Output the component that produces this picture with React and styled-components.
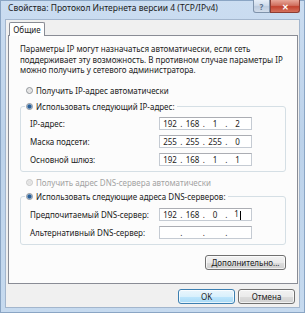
import styled, { createGlobalStyle } from "styled-components";

const Global = createGlobalStyle`
  html, body { margin: 0; padding: 0; background: #ffffff; }
  body { font-family: "Noto Sans", "Liberation Sans", sans-serif; color: #1b1b1b; }
`;

const Window = styled.div`
  width: 305px;
  height: 313px;
  box-sizing: border-box;
  display: flex;
  flex-direction: column;
  border: 1px solid #8aa5c4;
  padding: 0 4px 4px 4px;
  background: linear-gradient(180deg, #cbddf1 0%, #bcd2ea 45%, #c6daef 100%);
`;

const TitleBar = styled.div`
  height: 18px;
  display: flex;
  align-items: flex-start;
`;

const Title = styled.div`
  flex: 1;
  font-size: 8.5px;
  line-height: 13px;
  padding-left: 3px;
  white-space: nowrap;
`;

const CaptionButton = styled.div`
  width: ${(p) => p.$w}px;
  height: 13px;
  margin-top: -1px;
  box-sizing: border-box;
  border: 1px solid ${(p) => (p.$close ? "#8d3d33" : "#7f93ab")};
  border-top: none;
  border-radius: ${(p) => (p.$close ? "0 0 3px 0" : "0 0 0 3px")};
  display: flex;
  align-items: center;
  justify-content: center;
  font-size: 8px;
  font-weight: 700;
  color: ${(p) => (p.$close ? "#ffffff" : "#5a6f89")};
  background: ${(p) =>
    p.$close
      ? "linear-gradient(180deg, #e8a799 0%, #d0705f 45%, #c2432f 55%, #d5705c 100%)"
      : "linear-gradient(180deg, #e6eef8 0%, #cfdbea 45%, #bccbde 55%, #d3deeb 100%)"};
`;

const Client = styled.div`
  flex: 1;
  display: flex;
  flex-direction: column;
  background: #f0f0f0;
  border: 1px solid #a3b6cd;
  padding: 2px 1px 3px 2px;
`;

const Tab = styled.div`
  align-self: flex-start;
  margin-left: 1px;
  width: 36px;
  height: 14px;
  box-sizing: border-box;
  border: 1px solid #898c95;
  border-bottom: none;
  border-radius: 2px 2px 0 0;
  background: #ffffff;
  font-size: 8px;
  line-height: 13px;
  text-align: center;
  position: relative;
  z-index: 1;
  margin-bottom: -1px;
`;

const Panel = styled.div`
  flex: 1;
  background: #fcfcfc;
  border: 1px solid #898c95;
  padding: 8px 11px 0 11px;
  display: flex;
  flex-direction: column;
`;

const Desc = styled.p`
  margin: 0;
  font-size: 8px;
  line-height: 10.5px;
`;

const RadioRow = styled.div`
  display: flex;
  align-items: center;
  gap: 3px;
  height: 12px;
  font-size: 8px;
  margin-top: ${(p) => p.$mt || 0}px;
  padding-left: ${(p) => p.$pl || 0}px;
  color: ${(p) => (p.$disabled ? "#a3a3a3" : "#1b1b1b")};
  white-space: nowrap;
`;

const RadioDot = styled.span`
  width: 7px;
  height: 7px;
  box-sizing: border-box;
  border-radius: 50%;
  border: 1px solid ${(p) => (p.$disabled ? "#c6c6c6" : "#8e9297")};
  background: ${(p) =>
    p.$checked
      ? "radial-gradient(circle, #2a5f97 0 1.6px, #7fa9d6 2.2px, #e8eef5 3px)"
      : "radial-gradient(circle, #e3e3e3 0 1.5px, #f6f6f6 3px)"};
  flex: none;
`;

const Group = styled.fieldset`
  margin: ${(p) => p.$mt || 0}px 0 0 0;
  padding: 0;
  border: 1px solid #d5dfe5;
  border-radius: 3px;
  min-width: 0;
`;

const Legend = styled.legend`
  margin-left: 4px;
  padding: 0 2px 0 1px;
`;

const Rows = styled.div`
  display: flex;
  flex-direction: column;
  gap: 5px;
  padding: ${(p) => p.$pt}px 0 5px 9px;
`;

const FieldRow = styled.div`
  display: flex;
  align-items: center;
  height: 13px;
`;

const Label = styled.span`
  width: 129px;
  font-size: 8px;
  white-space: nowrap;
`;

const IpBox = styled.div`
  width: 93px;
  height: 13px;
  box-sizing: border-box;
  border: 1px solid #c5cbd3;
  border-top-color: #abadb3;
  background: #ffffff;
  display: flex;
  align-items: center;
  padding-left: 1px;
  font-size: 8px;
`;

const Octet = styled.span`
  width: 18px;
  text-align: center;
`;

const Dot = styled.span`
  width: 4.5px;
  text-align: center;
`;

const Caret = styled.span`
  display: inline-block;
  width: 1px;
  height: 9px;
  margin-left: 1px;
  background: #000;
  vertical-align: middle;
`;

const Button = styled.div`
  width: ${(p) => p.$w}px;
  height: 15px;
  box-sizing: border-box;
  border: 1px solid ${(p) => (p.$default ? "#3c7fb1" : "#707070")};
  border-radius: 3px;
  display: flex;
  align-items: center;
  justify-content: center;
  font-size: 8px;
  background: ${(p) =>
    p.$default
      ? "linear-gradient(180deg, #eaf6fd 0%, #d9f0fc 50%, #bee6fd 51%, #a7d9f5 100%)"
      : "linear-gradient(180deg, #f2f2f2 0%, #ebebeb 50%, #dddddd 51%, #cfcfcf 100%)"};
  box-shadow: inset 0 0 0 1px rgba(255, 255, 255, 0.7);
`;

const MoreRow = styled.div`
  display: flex;
  justify-content: flex-end;
  margin-top: 10px;
`;

const Footer = styled.div`
  display: flex;
  justify-content: flex-end;
  gap: 3px;
  margin-top: 5px;
  padding-right: 3px;
`;

const Ip = ({ parts, caret }) => (
  <IpBox>
    {parts.map((p, i) => (
      <span key={i} style={{ display: "contents" }}>
        {i > 0 && <Dot>.</Dot>}
        <Octet>
          {p}
          {caret && i === 3 && <Caret />}
        </Octet>
      </span>
    ))}
  </IpBox>
);

export default function App() {
  return (
    <>
      <Global />
      <Window>
        <TitleBar>
          <Title>Свойства: Протокол Интернета версии 4 (TCP/IPv4)</Title>
          <CaptionButton $w={17}>?</CaptionButton>
          <CaptionButton $w={30} $close>
            ✕
          </CaptionButton>
        </TitleBar>
        <Client>
          <Tab>Общие</Tab>
          <Panel>
            <Desc>
              Параметры IP могут назначаться автоматически, если сеть
              <br />
              поддерживает эту возможность. В противном случае параметры IP
              <br />
              можно получить у сетевого администратора.
            </Desc>
            <RadioRow $mt={9} $pl={6}>
              <RadioDot />
              Получить IP-адрес автоматически
            </RadioRow>
            <Group $mt={4}>
              <Legend>
                <RadioRow>
                  <RadioDot $checked />
                  Использовать следующий IP-адрес:
                </RadioRow>
              </Legend>
              <Rows $pt={4}>
                <FieldRow>
                  <Label>IP-адрес:</Label>
                  <Ip parts={["192", "168", "1", "2"]} />
                </FieldRow>
                <FieldRow>
                  <Label>Маска подсети:</Label>
                  <Ip parts={["255", "255", "255", "0"]} />
                </FieldRow>
                <FieldRow>
                  <Label>Основной шлюз:</Label>
                  <Ip parts={["192", "168", "1", "1"]} />
                </FieldRow>
              </Rows>
            </Group>
            <RadioRow $mt={5} $pl={6} $disabled>
              <RadioDot $disabled />
              Получить адрес DNS-сервера автоматически
            </RadioRow>
            <Group $mt={2}>
              <Legend>
                <RadioRow>
                  <RadioDot $checked />
                  Использовать следующие адреса DNS-серверов:
                </RadioRow>
              </Legend>
              <Rows $pt={5}>
                <FieldRow>
                  <Label>Предпочитаемый DNS-сервер:</Label>
                  <Ip parts={["192", "168", "0", "1"]} caret />
                </FieldRow>
                <FieldRow>
                  <Label>Альтернативный DNS-сервер:</Label>
                  <Ip parts={["", "", "", ""]} />
                </FieldRow>
              </Rows>
            </Group>
            <MoreRow>
              <Button $w={81}>Дополнительно...</Button>
            </MoreRow>
          </Panel>
          <Footer>
            <Button $w={57} $default>
              OK
            </Button>
            <Button $w={57}>Отмена</Button>
          </Footer>
        </Client>
      </Window>
    </>
  );
}
